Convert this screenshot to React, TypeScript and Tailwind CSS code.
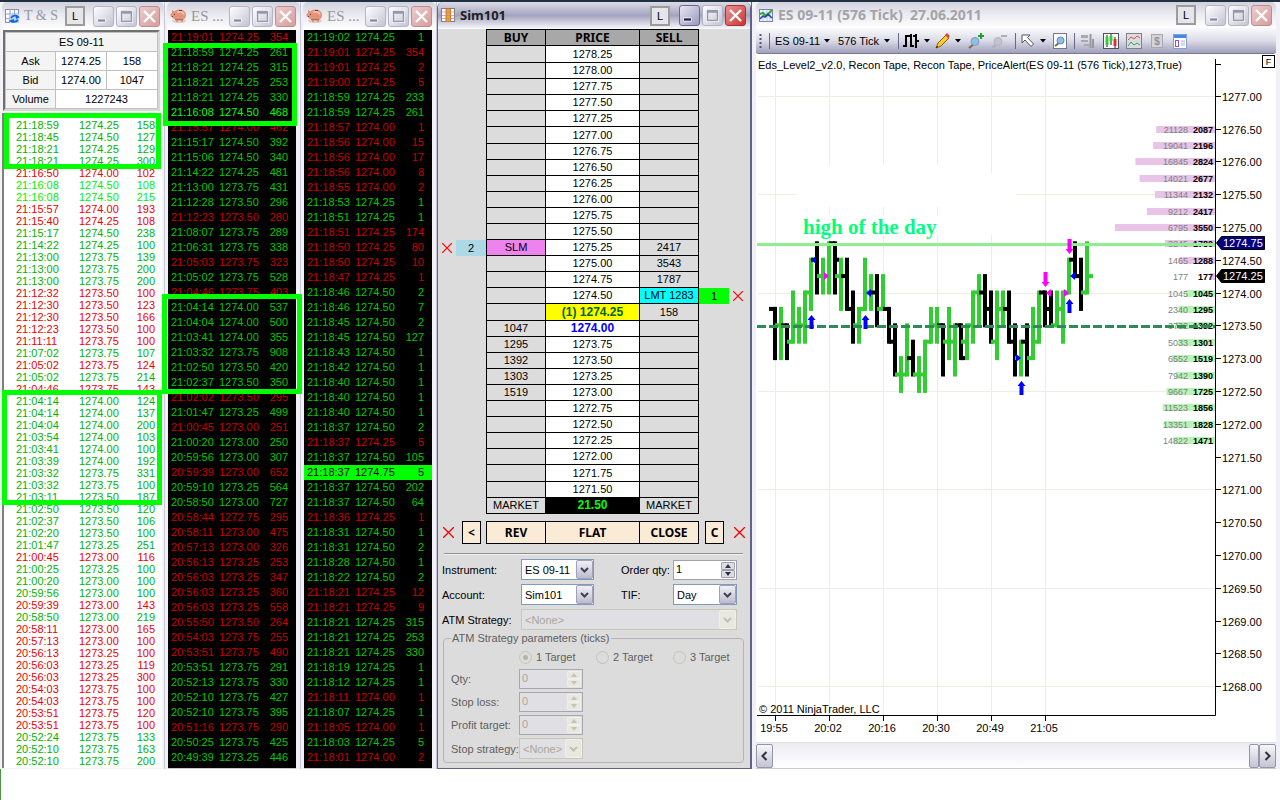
import type { ReactNode } from 'react'

type Tone = 'g' | 'r' | 'b' | 'k'
type Trade = [time: string, price: string, size: string, tone: Tone]

const parse = (text: string): Trade[] =>
    text.trim().split('\n').map((line) => line.trim().split(' ') as unknown as Trade)

const salesRows = parse(`
21:18:59 1274.25 158 g
21:18:45 1274.50 127 g
21:18:21 1274.25 129 g
21:18:21 1274.25 300 g
21:16:50 1274.00 102 r
21:16:08 1274.50 108 b
21:16:08 1274.50 215 b
21:15:57 1274.00 193 r
21:15:40 1274.25 108 r
21:15:17 1274.50 238 g
21:14:22 1274.25 100 g
21:13:00 1273.75 139 g
21:13:00 1273.75 200 g
21:13:00 1273.75 200 g
21:12:32 1273.50 100 r
21:12:30 1273.50 123 r
21:12:30 1273.50 166 r
21:12:23 1273.50 100 r
21:11:11 1273.75 100 r
21:07:02 1273.75 107 g
21:05:02 1273.75 124 r
21:05:02 1273.75 214 g
21:04:46 1273.75 143 r
21:04:14 1274.00 124 g
21:04:14 1274.00 137 g
21:04:04 1274.00 200 g
21:03:54 1274.00 103 g
21:03:41 1274.00 100 g
21:03:39 1274.00 192 g
21:03:32 1273.75 331 g
21:03:32 1273.75 100 g
21:03:11 1273.50 187 g
21:02:50 1273.50 120 g
21:02:37 1273.50 106 g
21:02:20 1273.50 100 g
21:01:47 1273.25 251 g
21:00:45 1273.00 116 r
21:00:25 1273.25 100 g
21:00:20 1273.00 100 g
20:59:56 1273.00 100 g
20:59:39 1273.00 143 r
20:58:50 1273.00 219 g
20:58:11 1273.00 165 r
20:57:13 1273.00 100 r
20:56:13 1273.25 100 r
20:56:03 1273.25 119 r
20:56:03 1273.25 300 r
20:54:03 1273.75 100 r
20:54:03 1273.75 100 r
20:53:51 1273.75 120 r
20:53:51 1273.75 100 r
20:52:24 1273.75 133 g
20:52:10 1273.75 163 g
20:52:10 1273.75 200 g
`)

const blockRows = parse(`
21:19:01 1274.25 354 r
21:18:59 1274.25 261 g
21:18:21 1274.25 315 g
21:18:21 1274.25 253 g
21:18:21 1274.25 330 g
21:16:08 1274.50 468 b
21:15:57 1274.00 462 r
21:15:17 1274.50 392 g
21:15:06 1274.50 340 g
21:14:22 1274.25 481 g
21:13:00 1273.75 431 g
21:12:28 1273.50 296 g
21:12:23 1273.50 280 r
21:08:07 1273.75 289 g
21:06:31 1273.75 338 g
21:05:03 1273.75 323 r
21:05:02 1273.75 528 g
21:04:46 1273.75 403 r
21:04:14 1274.00 537 g
21:04:04 1274.00 500 g
21:03:41 1274.00 355 g
21:03:32 1273.75 908 g
21:02:50 1273.50 420 g
21:02:37 1273.50 350 g
21:02:02 1273.50 295 r
21:01:47 1273.25 499 g
21:00:45 1273.00 251 r
21:00:20 1273.00 250 g
20:59:56 1273.00 307 g
20:59:39 1273.00 652 r
20:59:10 1273.25 564 g
20:58:50 1273.00 727 g
20:58:44 1272.75 295 r
20:58:11 1273.00 475 r
20:57:13 1273.00 326 r
20:56:13 1273.25 253 r
20:56:03 1273.25 347 r
20:56:03 1273.25 360 r
20:56:03 1273.25 558 r
20:55:50 1273.50 264 r
20:54:03 1273.75 255 r
20:53:51 1273.75 490 r
20:53:51 1273.75 291 g
20:52:13 1273.75 330 g
20:52:10 1273.75 427 g
20:52:10 1273.75 395 g
20:51:16 1273.75 290 r
20:50:25 1273.75 425 g
20:49:39 1273.25 446 g
`)

const allRows = parse(`
21:19:02 1274.25 1 g
21:19:01 1274.25 354 r
21:19:01 1274.25 2 r
21:19:00 1274.25 5 r
21:18:59 1274.25 233 g
21:18:59 1274.25 261 g
21:18:57 1274.00 1 r
21:18:56 1274.00 15 r
21:18:56 1274.00 17 r
21:18:56 1274.00 8 r
21:18:55 1274.00 2 r
21:18:53 1274.25 1 g
21:18:51 1274.25 1 g
21:18:51 1274.25 174 r
21:18:50 1274.25 80 r
21:18:50 1274.25 10 r
21:18:47 1274.25 1 r
21:18:46 1274.50 2 g
21:18:46 1274.50 7 g
21:18:45 1274.50 2 g
21:18:45 1274.50 127 g
21:18:43 1274.50 1 g
21:18:42 1274.50 1 g
21:18:40 1274.50 1 g
21:18:40 1274.50 1 g
21:18:40 1274.50 1 g
21:18:37 1274.50 2 g
21:18:37 1274.25 5 r
21:18:37 1274.50 105 g
21:18:37 1274.75 5 k
21:18:37 1274.50 202 g
21:18:37 1274.50 64 g
21:18:36 1274.25 1 r
21:18:31 1274.50 1 g
21:18:31 1274.50 2 g
21:18:28 1274.50 1 g
21:18:22 1274.50 2 g
21:18:21 1274.25 12 r
21:18:21 1274.25 9 r
21:18:21 1274.25 315 g
21:18:21 1274.25 253 g
21:18:21 1274.25 330 g
21:18:19 1274.25 1 g
21:18:12 1274.25 1 g
21:18:11 1274.00 1 r
21:18:07 1274.25 1 g
21:18:05 1274.00 1 r
21:18:03 1274.25 5 g
21:18:01 1274.00 2 r
`)

const lightTones: Record<Tone, string> = {
    g: 'text-[#00b400]',
    r: 'text-[#f00000]',
    b: 'text-[#00f000]',
    k: 'text-black',
}

const darkTones: Record<Tone, string> = {
    g: 'text-[#00c800]',
    r: 'text-[#c80000]',
    b: 'text-[#00ff00]',
    k: 'bg-[#00ff00] text-black',
}

/* ---------- window chrome ---------- */

function CaptionButton({ kind, active, dim }: { kind: 'min' | 'max' | 'close'; active?: boolean; dim?: boolean }) {
    const look =
        kind === 'close'
            ? active
                ? 'border-[#b03030] bg-linear-to-br from-[#f09090] to-[#c83030]'
                : 'border-[#c08c94] bg-linear-to-br from-[#eccccc] to-[#d89c9c]'
            : active && !dim
                ? 'border-[#6a6a90] bg-linear-to-br from-[#e8e8f4] to-[#9a9abc]'
                : 'border-[#b4b4c6] bg-linear-to-br from-white to-[#c4c4d4]'
    return (
        <button
            type="button"
            aria-label={kind === 'min' ? 'Minimize' : kind === 'max' ? 'Maximize' : 'Close'}
            className={`flex size-[21px] shrink-0 items-center justify-center rounded-[3px] border ${look}`}
        >
            <svg width="17" height="17" viewBox="0 0 17 17" fill="none">
                {kind === 'min' && <path d="M2.500 12.500h8" stroke="#fff" strokeWidth="4" />}
                {kind === 'min' && <path d="M3 12.500h7" stroke={active ? '#26264a' : '#8c8ca0'} strokeWidth="2.400" />}
                {kind === 'max' && (
                    <>
                        <rect x="2.500" y="2.500" width="12" height="12" stroke="#fff" />
                        <path d="M3.500 3.500h10v10h-10zM3.500 5h10" stroke="#9898ac" strokeWidth="1.500" />
                    </>
                )}
                {kind === 'close' && <path d="M3 3l11 11M14 3L3 14" stroke="#fff" strokeWidth="2.400" />}
            </svg>
        </button>
    )
}

interface TitleBarProps {
    icon: ReactNode
    title: string
    titleClass: string
    height?: string
    link?: string
    active?: boolean
}

function TitleBar({ icon, title, titleClass, height = 'h-7', link, active }: TitleBarProps) {
    const bg = active
        ? 'from-[#dcdce6] via-[#a4a4c0] to-[#fafafe]'
        : 'from-[#d2d2de] via-[#ececf2] to-white'
    return (
        <div className={`flex items-center gap-[2px] rounded-t-[5px] bg-linear-to-b pr-1 pl-[3px] ${height} ${bg}`}>
            {icon}
            <h2 className={`min-w-0 flex-1 overflow-hidden pl-[2px] whitespace-pre ${titleClass}`}>{title}</h2>
            {link && (
                <button type="button" className={`size-5 shrink-0 border-2 border-[#9c9c9c] bg-[#e6e6ea] text-center text-[11px] leading-4 text-black ${link}`}>L</button>
            )}
            <CaptionButton kind="min" active={active} />
            <CaptionButton kind="max" active={active} dim />
            <CaptionButton kind="close" active={active} />
        </div>
    )
}

const SheetIcon = () => (
    <svg className="shrink-0" width="15" height="15" viewBox="0 0 15 15">
        <rect x=".5" y=".5" width="13" height="13" fill="#fff" stroke="#8c8cac" />
        <path d="M5 1v13M9.500 1v13M1 5h13M1 9.500h13" stroke="#9c9cbc" />
        <rect x="5" y="5" width="9" height="9" fill="#b8d8f8" />
        <path d="M6 9c2-3 5-3 7-1l-2 1M13 11c-3 3-5 2-7 1l3-1" stroke="#1464dc" strokeWidth="2" fill="none" />
    </svg>
)

const PigIcon = () => (
    <svg className="shrink-0" width="17" height="16" viewBox="0 0 17 16">
        <ellipse cx="9" cy="13" rx="7" ry="2" fill="#d8d0d0" />
        <path d="M2 2l2.500 1.500C5.500 2 7 1.500 9.500 1.500c4 0 6.500 2 6.500 5.500 0 2-1 4-3 5V14h-2v-1.500H8V14H6v-2.500C4 11 3 10.500 2 9L.5 8.500V6L2 5z" fill="#e0957c" />
        <path d="M7 4.500c3-1.500 6-.5 7 2" stroke="#f6c8b4" strokeWidth="1.500" fill="none" />
        <path d="M4 6.500h1M2 8.500h1M9 2.500h3" stroke="#7a3a2c" />
        <path d="M5 11.500h8" stroke="#b86450" />
    </svg>
)

const LadderIcon = () => (
    <svg className="shrink-0" width="15" height="15" viewBox="0 0 15 15">
        <rect x=".5" y=".5" width="13" height="13" fill="#fff" stroke="#8c7c7c" />
        <rect x="5" y="1" width="5" height="12.500" fill="#f8a020" />
        <path d="M5 1v13M9.500 1v13" stroke="#c87828" />
        <path d="M1 4h13M1 7.500h13M1 10.500h13" stroke="#ac8c9c" strokeOpacity=".7" />
    </svg>
)

const ChartIcon = () => (
    <svg className="shrink-0" width="15" height="15" viewBox="0 0 15 15">
        <rect x=".5" y="1.500" width="13" height="12" fill="#f4f6ff" stroke="#7884b4" />
        <path d="M4 2v11M8 2v11M11 2v11M1 5h12M1 9h12" stroke="#bcc4e4" />
        <path d="M1 6l3-1 3 3 6-6" stroke="#30b030" strokeWidth="2" fill="none" />
        <path d="M1 11l3-3 2 1 3-3 4 4" stroke="#2848b0" strokeWidth="1.500" fill="none" />
    </svg>
)

/* ---------- time & sales ---------- */

function QuoteTable() {
    const cell = 'h-[19px] border border-[#c0c0c0] p-0 text-center font-normal'
    return (
        <table className="w-full table-fixed border-collapse bg-white text-[11px] leading-4">
            <colgroup>
                <col className="w-[50px]" />
                <col className="w-[51px]" />
                <col />
            </colgroup>
            <tbody>
                <tr><th colSpan={3} className={`${cell} bg-[#f4f4f4]`}>ES 09-11</th></tr>
                <tr>
                    <th scope="row" className={`${cell} bg-[#f4f4f4]`}>Ask</th>
                    <td className={cell}>1274.25</td>
                    <td className={cell}>158</td>
                </tr>
                <tr>
                    <th scope="row" className={`${cell} bg-[#f4f4f4]`}>Bid</th>
                    <td className={cell}>1274.00</td>
                    <td className={cell}>1047</td>
                </tr>
                <tr>
                    <th scope="row" className={`${cell} bg-[#f4f4f4]`}>Volume</th>
                    <td colSpan={2} className={cell}>1227243</td>
                </tr>
            </tbody>
        </table>
    )
}

function TimeAndSales() {
    return (
        <section className="w-[165px] shrink-0 border-r border-[#c8c8d8] bg-[#f4f4f8] pl-[2px]">
            <TitleBar icon={<SheetIcon />} title="T & S" titleClass="font-['Liberation_Serif',serif] text-sm text-[#98989c]" link="mr-[6px]" />
            <div className="mr-1 ml-px border-2 border-[#707070] border-r-[#d8d8d8] border-b-[#d8d8d8]">
                <QuoteTable />
            </div>
            <div className="mt-[2px] mr-[2px] border-l-2 border-[#808080] bg-white pt-[6px] pb-px">
                <table className="w-full table-fixed text-[11px] leading-3">
                    <tbody>
                        {salesRows.map(([time, price, size, tone], i) => (
                            <tr key={i} className={lightTones[tone]}>
                                <td className="w-[75px] py-0 pr-0 pl-3">{time}</td>
                                <td className="w-10 p-0">{price}</td>
                                <td className="py-0 pr-[7px] pl-0 text-right">{size}</td>
                            </tr>
                        ))}
                    </tbody>
                </table>
            </div>
        </section>
    )
}

function Tape({ rows }: { rows: Trade[] }) {
    return (
        <section className="w-[136px] shrink-0 border-r border-[#c8c8d8] bg-[#f0f0f6]">
            <div className="pl-[2px]">
                <TitleBar icon={<PigIcon />} title="ES ..." titleClass="font-['Liberation_Serif',serif] text-[15px] text-[#98989c]" />
            </div>
            <div className="mr-1 ml-[3px] border-b border-[#c8c8d8] bg-black pb-[3px]">
                <table className="w-full table-fixed text-[11px] leading-[15px]">
                    <tbody>
                        {rows.map(([time, price, size, tone], i) => (
                            <tr key={i} className={darkTones[tone]}>
                                <td className="w-[51px] py-0 pr-0 pl-[3px]">{time}</td>
                                <td className="w-10 p-0">{price}</td>
                                <td className="py-0 pr-2 pl-0 text-right">{size}</td>
                            </tr>
                        ))}
                    </tbody>
                </table>
            </div>
        </section>
    )
}

/* ---------- price ladder ---------- */

const buyDepth: Record<string, string> = {
    '1275.25': 'SLM',
    '1274.00': '1047',
    '1273.75': '1295',
    '1273.50': '1392',
    '1273.25': '1303',
    '1273.00': '1519',
}

const sellDepth: Record<string, string> = {
    '1275.25': '2417',
    '1275.00': '3543',
    '1274.75': '1787',
    '1274.50': 'LMT 1283',
    '1274.25': '158',
}

const ladder = Array.from({ length: 28 }, (_, i) => (1278.25 - i * 0.25).toFixed(2))

// the ladder spreads its spare pixels over a few rows
const tallRows = ['1278.25', '1277.00', '1274.25', '1271.75']

const RedX = ({ size = 10 }: { size?: number }) => (
    <svg className="mx-auto block" width={size} height={size} viewBox="0 0 10 10">
        <path d="M0 0l10 10M10 0L0 10" stroke="#ff0000" strokeWidth="1.200" />
    </svg>
)

function PriceLadder() {
    const side = 'border-r border-b border-black p-0'
    return (
        <table className="w-full table-fixed border-separate border-spacing-0 text-center text-[11px] leading-[15px]">
            <colgroup>
                <col className="w-[18px]" />
                <col className="w-[30px]" />
                <col className="w-[60px]" />
                <col className="w-[94px]" />
                <col className="w-[59px]" />
                <col className="w-[30px]" />
                <col />
            </colgroup>
            <thead>
                <tr className="h-[17px] font-['Noto_Sans',sans-serif] text-xs leading-[15px] font-bold">
                    <td colSpan={2} className="p-0" />
                    <th scope="col" className={`${side} border-t border-l bg-[#a8a8a8]`}>BUY</th>
                    <th scope="col" className={`${side} border-t bg-[#a8a8a8]`}>PRICE</th>
                    <th scope="col" className={`${side} border-t bg-[#a8a8a8]`}>SELL</th>
                    <td colSpan={2} className="p-0" />
                </tr>
            </thead>
            <tbody>
                {ladder.map((price) => {
                    const stop = price === '1275.25'
                    const limit = price === '1274.50'
                    return (
                        <tr key={price} className={tallRows.includes(price) ? 'h-[17px]' : 'h-4'}>
                            <td className="p-0">{stop && <button type="button" aria-label="Cancel stop" className="block w-full"><RedX /></button>}</td>
                            <td className={`p-0 ${stop ? 'bg-[#add8e6]' : ''}`}>{stop && '2'}</td>
                            <td className={`${side} border-l ${stop ? 'bg-[#ee82ee]' : ''}`}>{buyDepth[price]}</td>
                            {price === '1274.25' ? (
                                <td className={`${side} bg-[#ffff00] text-xs leading-[15px] font-bold text-[#006400]`}>(1) 1274.25</td>
                            ) : price === '1274.00' ? (
                                <td className={`${side} bg-white text-xs leading-[15px] font-bold text-[#0000ff]`}>1274.00</td>
                            ) : (
                                <td className={`${side} bg-white`}>{price}</td>
                            )}
                            <td className={`${side} ${limit ? 'bg-[#00ffff]' : ''}`}>{sellDepth[price]}</td>
                            <td className={`p-0 ${limit ? 'bg-[#00ff00]' : ''}`}>{limit && '1'}</td>
                            <td className="p-0 pr-1">{limit && <button type="button" aria-label="Cancel limit" className="block w-full"><RedX /></button>}</td>
                        </tr>
                    )
                })}
                <tr className="h-4">
                    <td colSpan={2} className="p-0" />
                    <td className={`${side} border-l`}>MARKET</td>
                    <td className={`${side} bg-black text-xs leading-[15px] font-bold text-[#00ff00]`}>21.50</td>
                    <td className={side}>MARKET</td>
                    <td colSpan={2} className="p-0" />
                </tr>
            </tbody>
        </table>
    )
}

function LadderActions() {
    const key = 'h-[23px] border border-black bg-[#faebd7]'
    return (
        <div className="mt-[7px] flex items-center font-['Noto_Sans',sans-serif] text-xs font-bold">
            <button type="button" aria-label="Cancel all buy orders" className="mr-2 ml-[5px]"><RedX size={11} /></button>
            <button type="button" className={`${key} mr-[5px] w-[19px]`}>&lt;</button>
            <button type="button" className={`${key} w-[60px]`}>REV</button>
            <button type="button" className={`${key} w-[94px] border-l-0`}>FLAT</button>
            <button type="button" className={`${key} w-[59px] border-l-0`}>CLOSE</button>
            <button type="button" className={`${key} ml-[6px] w-[19px]`}>C</button>
            <button type="button" aria-label="Cancel all sell orders" className="ml-[10px]"><RedX size={11} /></button>
        </div>
    )
}

interface FieldProps {
    id: string
    value: string
    className: string
    disabled?: boolean
}

function SelectBox({ id, value, className, disabled }: FieldProps) {
    return (
        <div className={`flex h-[21px] border ${disabled ? 'border-[#c8c8b8] bg-[#e0dfe3]' : 'border-[#7f9db9] bg-white'} ${className}`}>
            <select id={id} disabled={disabled} className={`min-w-0 flex-1 appearance-none pl-[3px] ${disabled ? 'text-[#a8a898]' : 'text-black'}`}>
                <option>{value}</option>
            </select>
            <span className={`pointer-events-none flex w-[17px] shrink-0 items-center justify-center rounded-[2px] border ${disabled ? 'border-[#f0f0e8] bg-[#e8e8e0]' : 'border-[#a0a0b8] bg-linear-to-b from-[#f0f0f6] to-[#bcbcd0]'}`}>
                <svg width="9" height="6" viewBox="0 0 9 6" fill="none">
                    <path d="M1 1l3.500 3.500L8 1" stroke={disabled ? '#c0c0b0' : '#404050'} strokeWidth="2" />
                </svg>
            </span>
        </div>
    )
}

function SpinBox({ id, value, className, disabled }: FieldProps) {
    const arrow = disabled ? '#c4c4b4' : '#303040'
    const half = `flex h-2 w-[14px] items-center justify-center rounded-[1px] border ${disabled ? 'border-[#f0f0e8] bg-[#e8e8e0]' : 'border-[#a0a0b0] bg-[#dcdce6]'}`
    return (
        <div className={`flex h-5 border ${disabled ? 'border-[#a8a8b0] bg-[#e0dfe3]' : 'border-[#a0a0b0] bg-white'} ${className}`}>
            <input id={id} type="text" defaultValue={value} disabled={disabled} className={`w-0 min-w-0 flex-1 pb-[2px] pl-[2px] ${disabled ? 'text-[#a8a898]' : 'text-black'}`} />
            <span className="flex shrink-0 flex-col justify-center pr-px">
                <button type="button" aria-label="Increase" disabled={disabled} className={half}>
                    <svg width="6" height="4" viewBox="0 0 6 4"><path d="M0 4l3-4 3 4z" fill={arrow} /></svg>
                </button>
                <button type="button" aria-label="Decrease" disabled={disabled} className={half}>
                    <svg width="6" height="4" viewBox="0 0 6 4"><path d="M0 0l3 4 3-4z" fill={arrow} /></svg>
                </button>
            </span>
        </div>
    )
}

function TargetRadio({ label, checked }: { label: string; checked?: boolean }) {
    return (
        <label className="flex w-[77px] shrink-0 items-center gap-1 last:w-auto">
            <input type="radio" name="target" disabled defaultChecked={checked} className="peer sr-only" />
            <span className="flex size-[13px] items-center justify-center rounded-full border border-[#c4c4b8] after:size-[5px] after:rounded-full peer-checked:after:bg-[#b4b4a8]" />
            {label}
        </label>
    )
}

const strategyFields = [
    { id: 'strategy-qty', label: 'Qty:' },
    { id: 'stop-loss', label: 'Stop loss:' },
    { id: 'profit-target', label: 'Profit target:' },
]

function OrderForm() {
    return (
        <form className="mt-[9px] mr-[6px] ml-1 text-[11px] leading-4">
            <div className="mr-px ml-[2px] h-[2px] border-t border-[#909090] bg-[#f4f4f4]" />
            <div className="mt-1 grid grid-cols-[79px_100px_52px_64px] items-center gap-y-1">
                <label htmlFor="instrument">Instrument:</label>
                <SelectBox id="instrument" value="ES 09-11" className="w-[73px]" />
                <label htmlFor="order-qty">Order qty:</label>
                <SpinBox id="order-qty" value="1" className="w-16" />
                <label htmlFor="account">Account:</label>
                <SelectBox id="account" value="Sim101" className="w-[73px]" />
                <label htmlFor="tif">TIF:</label>
                <SelectBox id="tif" value="Day" className="w-16" />
                <label htmlFor="atm" className="whitespace-nowrap">ATM Strategy:</label>
                <SelectBox id="atm" value="<None>" className="col-span-3" disabled />
            </div>
            <fieldset className="ml-px h-[133px] min-w-0 rounded border border-[#b8b4b4] pl-[7px] text-[#606060]">
                <legend className="px-px">ATM Strategy parameters (ticks)</legend>
                <div className="mt-[3px] flex pl-[68px]">
                    <TargetRadio label="1 Target" checked />
                    <TargetRadio label="2 Target" />
                    <TargetRadio label="3 Target" />
                </div>
                <div className="mt-1 grid grid-cols-[68px_64px] items-center gap-y-[3px]">
                    {strategyFields.map(({ id, label }) => (
                        <div key={id} className="contents">
                            <label htmlFor={id}>{label}</label>
                            <SpinBox id={id} value="0" className="w-16" disabled />
                        </div>
                    ))}
                    <label htmlFor="stop-strategy" className="whitespace-nowrap">Stop strategy:</label>
                    <SelectBox id="stop-strategy" value="<None>" className="w-16" disabled />
                </div>
            </fieldset>
        </form>
    )
}

function OrderEntry() {
    return (
        <section className="w-[314px] shrink-0 rounded-t-md border-x border-b border-[#62628a] bg-[#dcdcdc]">
            <TitleBar icon={<LadderIcon />} title="Sim101" titleClass="font-['Noto_Sans',sans-serif] text-[13px] font-bold text-[#202020]" height="h-[27px]" link="mr-[7px]" active />
            <PriceLadder />
            <LadderActions />
            <OrderForm />
        </section>
    )
}

/* ---------- chart ---------- */

const priceY = (price: number) => 293.5 - (price - 1274) * 65.6
const tickY = (level: number) => priceY(1272.5 + level * 0.25) - 1

// [up, high, low, open], levels are quarter points above 1272.50
const bars: [number, number, number, number][] = [
    [0, 5, 2, 5], [1, 5, 2, 4], [0, 4, 2, 4], [1, 6, 3, 3], [1, 5, 3, 4], [1, 6, 3, 4], [1, 8, 5, 6], [0, 9, 6, 8],
    [1, 8, 6, 7], [1, 9, 6, 7], [0, 9, 6, 9], [1, 8, 5, 7], [0, 8, 5, 7], [0, 6, 3, 5], [1, 5, 3, 4], [1, 8, 5, 5],
    [1, 7, 5, 6], [0, 7, 4, 6], [1, 7, 5, 5], [0, 5, 3, 5], [0, 4, 1, 3], [1, 2, 0, 1], [1, 4, 1, 1], [0, 3, 1, 2],
    [1, 2, 0, 1], [1, 3, 0, 1], [1, 5, 3, 3], [1, 5, 3, 4], [0, 4, 1, 4], [1, 5, 2, 3], [1, 4, 1, 3], [0, 4, 2, 4],
    [1, 4, 2, 3], [1, 6, 3, 4], [1, 7, 4, 6], [0, 7, 4, 6], [0, 6, 3, 5], [1, 6, 2, 3], [1, 6, 4, 5], [0, 6, 3, 5],
    [0, 4, 1, 3], [1, 3, 1, 2], [0, 4, 1, 3], [1, 5, 2, 2], [1, 6, 3, 3], [0, 6, 4, 6], [0, 6, 4, 5], [1, 6, 4, 4],
    [1, 6, 3, 5], [1, 8, 6, 6], [0, 9, 7, 8], [0, 8, 5, 7], [1, 9, 6, 6],
]

const depth: [number, string, number][] = [
    [1276.5, '21128', 2087], [1276.25, '19041', 2196], [1276, '16845', 2824], [1275.75, '14021', 2677],
    [1275.5, '11344', 2132], [1275.25, '9212', 2417], [1275, '6795', 3550], [1274.75, '3245', 1780],
    [1274.5, '1465', 1288], [1274.25, '177', 177], [1274, '1045', 1045], [1273.75, '2340', 1295],
    [1273.5, '3732', 1392], [1273.25, '5033', 1301], [1273, '6552', 1519], [1272.75, '7942', 1390],
    [1272.5, '9667', 1725], [1272.25, '11523', 1856], [1272, '13351', 1828], [1271.75, '14822', 1471],
]

const times: [number, string][] = [[775, '19:55'], [829, '20:02'], [883, '20:16'], [937, '20:30'], [991, '20:49'], [1045, '21:05']]
const axisPrices = Array.from({ length: 19 }, (_, i) => 1277 - i * 0.5)
const gridPrices = Array.from({ length: 7 }, (_, i) => 1277 - i * 1.5)

const upArrow = 'l4 5h-2v9h-4v-9h-2z'
const downArrow = 'l4 -5h-2v-10h-4v10h-2z'

function PriceTag({ price, fill }: { price: number; fill: string }) {
    const y = Math.round(priceY(price)) - 1
    return (
        <g>
            <path d={`M1216.500 ${y}l5-6.500h43v13h-43z`} fill={fill} stroke="#000" />
            <text x="1223" y={y + 4} fill="#fff">{price.toFixed(2)}</text>
        </g>
    )
}

function PriceChart() {
    return (
        <svg className="block h-auto w-full bg-white" viewBox="756 54 520 688" fontFamily="'Liberation Sans', Arial, sans-serif" fontSize="11">
            <g stroke="#eeeee2">
                {times.map(([x]) => <path key={x} d={`M${x + 0.5} 70V715`} />)}
                {gridPrices.map((p) => <path key={p} d={`M758 ${Math.round(priceY(p)) - 0.5}H1215`} />)}
            </g>
            {/* clear space around the note */}
            <path d="M796 165h190v8h30v62h-220v-20h190v-8h-190z" fill="#fff" />

            <text x="758" y="69">Eds_Level2_v2.0, Recon Tape, Recon Tape, PriceAlert(ES 09-11 (576 Tick),1273,True)</text>
            <text x="759" y="713">© 2011 NinjaTrader, LLC</text>

            {depth.map(([price, total, size]) => {
                const y = Math.round(priceY(price))
                return (
                    <g key={price} fontSize="9" textAnchor="end">
                        <rect x={1215 - size / 35.5} y={y - 4} width={size / 35.5} height="7" fill={price > 1274 ? '#e8c4e8' : '#b8f4b8'} />
                        <text x="1188" y={y + 3} fill="#808080">{total}</text>
                        <text x="1213" y={y + 3} fontWeight="bold">{size}</text>
                    </g>
                )
            })}

            {bars.map(([up, high, low, open], i) => {
                const x = 775 + i * 6
                return (
                    <g key={i} fill={up ? '#32cd32' : '#000'}>
                        <rect x={x - 2} y={tickY(high) - 2} width="4" height={tickY(low) - tickY(high) + 4} />
                        <rect x={x - 6} y={tickY(open) - 2} width="6" height="4" />
                    </g>
                )
            })}
            <rect x="835" y={tickY(8) - 2} width="4" height="4" />
            <rect x="961" y={tickY(2) - 2} width="4" height="4" />
            <rect x="1087" y={tickY(7) - 2} width="6" height="4" fill="#32cd32" />

            <path d="M757 244.500H1215" stroke="#90ee90" strokeWidth="3" />
            <path d="M757 326.500H1215" stroke="#2e8b57" strokeWidth="3" strokeDasharray="9 3" />

            <g fill="#0000ff">
                <path d={`M811.500 315${upArrow}`} />
                <path d={`M865.500 315${upArrow}`} />
                <path d={`M1021.500 381${upArrow}`} />
                <path d={`M1069.500 299${upArrow}`} />
                <path d="M811 260l5-4v8zM866 293l5-4v8zM1070 276l5-4v8zM1021 358l-5-4v8z" />
            </g>
            <g fill="#ff00ff">
                <path d={`M1045.500 287${downArrow}`} />
                <path d={`M1069.500 254${downArrow}`} />
                <path d="M829 276l-5-4v8zM1069 293l-5-4v8zM1046 293l5-4v8z" />
            </g>

            <text x="803" y="234" fontFamily="'Liberation Serif', serif" fontSize="21" fontWeight="bold" fill="#00ff7f">high of the day</text>

            <path d="M757 715.500H1215.500V59M1216 64.500h5" stroke="#000" fill="none" />
            {axisPrices.map((p) => {
                const y = Math.round(priceY(p)) - 0.5
                return (
                    <g key={p}>
                        <path d={`M1216 ${y}h5`} stroke="#000" />
                        <text x="1222" y={y + 4}>{p.toFixed(2)}</text>
                    </g>
                )
            })}
            {times.map(([x, label]) => (
                <g key={x}>
                    <path d={`M${x + 0.5} 716v5`} stroke="#000" />
                    <text x={x - 1} y="732" textAnchor="middle">{label}</text>
                </g>
            ))}
            <PriceTag price={1274.75} fill="#000080" />
            <PriceTag price={1274.25} fill="#000" />
            <rect x="1262.500" y="55.500" width="12" height="12" fill="#fff" stroke="#000" />
            <text x="1268.500" y="65" fontSize="9" textAnchor="middle">F</text>
        </svg>
    )
}

const Caret = () => (
    <svg className="shrink-0" width="6" height="4" viewBox="0 0 6 4"><path d="M0 0h6L3 3.500z" /></svg>
)

const Divider = () => <span className="h-4 w-px shrink-0 bg-[#68688c]" />

function Tool({ label, children, className = '' }: { label: string; children: ReactNode; className?: string }) {
    return (
        <button type="button" aria-label={label} className={`flex shrink-0 items-center gap-1 ${className}`}>
            {children}
        </button>
    )
}

function Glyph({ children }: { children: ReactNode }) {
    return <svg className="shrink-0" width="16" height="16" viewBox="0 0 16 16" fill="none">{children}</svg>
}

function ChartToolbar() {
    return (
        <div className="flex h-[26px] items-center rounded-b-[3px] border-b border-[#78789a] bg-linear-to-b from-[#fafafc] via-[#dcdce8] to-[#a0a0bc] pl-[3px] text-[11px] leading-4">
            <svg className="mr-[7px] shrink-0" width="3" height="14" viewBox="0 0 3 14"><path d="M1.500 0v14" stroke="#55557a" strokeWidth="2" strokeDasharray="2 2" /></svg>
            <Divider />
            <button type="button" className="ml-[5px] flex items-center gap-1 whitespace-nowrap">ES 09-11 <Caret /></button>
            <button type="button" className="ml-2 flex items-center gap-[5px] whitespace-nowrap">576 Tick <Caret /></button>
            <span className="w-2" />
            <Divider />
            <Tool label="Chart style" className="ml-[3px]">
                <svg className="shrink-0" width="18" height="16" viewBox="0 0 18 16" fill="none">
                    <path d="M4 2v12M1 13h3M4 3h3M9 1v13M7 3h2M9 13h3M14 1v14M11 3h3M14 8h3" stroke="#000" strokeWidth="2" />
                </svg>
                <Caret />
            </Tool>
            <Tool label="Drawing tools" className="ml-[5px]">
                <Glyph>
                    <path d="M1 15l2-5 8-8 3 3-8 8z" fill="#f8cc30" stroke="#906010" />
                    <path d="M10 2l2-2 3 3-2 2z" fill="#e04830" />
                    <path d="M1 15l1-2 1 1z" fill="#000" />
                </Glyph>
                <Caret />
            </Tool>
            <Tool label="Zoom in" className="ml-[7px]">
                <Glyph>
                    <path d="M1 15l5-4" stroke="#806850" strokeWidth="2" />
                    <circle cx="7" cy="8.500" r="4" fill="#8cc0e8" stroke="#8898a8" />
                    <path d="M10 3h6M13 0v6" stroke="#10a830" strokeWidth="2" />
                </Glyph>
            </Tool>
            <Tool label="Zoom out" className="ml-[7px]">
                <Glyph>
                    <path d="M1 15l5-4" stroke="#b0b0b4" strokeWidth="2" />
                    <circle cx="7" cy="8.500" r="4" fill="#c4c4cc" stroke="#b4b4bc" />
                    <path d="M10 3h6" stroke="#b0b0b8" strokeWidth="2" />
                </Glyph>
            </Tool>
            <span className="w-2" />
            <Divider />
            <Tool label="Pointer" className="ml-1">
                <Glyph>
                    <path d="M2 2h8L7.500 4.500l6 6.500-2.500 2.500-6-6.500L2 10z" fill="#fff" stroke="#55555a" />
                </Glyph>
                <Caret />
            </Tool>
            <Tool label="Data box" className="ml-[6px]">
                <Glyph>
                    <rect x="1.500" y=".5" width="13" height="15" fill="#fff" stroke="#78788c" />
                    <path d="M3 13l4-3" stroke="#806850" strokeWidth="2" />
                    <circle cx="8.500" cy="7.500" r="3.500" fill="#8cc0e8" stroke="#6888b0" />
                </Glyph>
            </Tool>
            <span className="w-[6px]" />
            <Divider />
            <Tool label="Chart trader" className="ml-[5px]">
                <Glyph>
                    <path d="M1 2h7v3H1zM1 7h7v2H1zM4 11h5v2H4z" fill="#a8a8b0" />
                    <path d="M10.500 1v14M13 6v9" stroke="#98989f" strokeWidth="2" />
                </Glyph>
            </Tool>
            <Tool label="Data series" className="ml-[7px]">
                <Glyph>
                    <rect x=".5" y=".5" width="15" height="15" fill="#fff" stroke="#505058" />
                    <path d="M4 2v12M8 1v11M12 4v11" stroke="#202020" />
                    <path d="M2.500 4h3v8h-3zM6.500 3h3v5h-3z" fill="#30d030" />
                    <path d="M10.500 6h3v7h-3z" fill="#e03030" />
                </Glyph>
            </Tool>
            <Tool label="Indicators" className="ml-[7px]">
                <Glyph>
                    <rect x=".5" y=".5" width="15" height="15" fill="#dcdce0" stroke="#808088" />
                    <path d="M2 7l3-3 3 2 3-3 3 2" stroke="#e05050" />
                    <path d="M2 13l3-4 3 3 3-2 3 2" stroke="#30a060" />
                </Glyph>
            </Tool>
            <Tool label="Strategies" className="ml-[7px]">
                <Glyph>
                    <rect x="2.500" y="1.500" width="11" height="13" fill="#d4d4dc" stroke="#a8a8b0" />
                    <text x="8" y="12" fontSize="10" fontWeight="bold" textAnchor="middle" fill="#909098">$</text>
                </Glyph>
            </Tool>
            <Tool label="Properties" className="ml-[7px]">
                <Glyph>
                    <rect x="1.500" y="1.500" width="13" height="14" fill="#fff" stroke="#88a0d0" />
                    <path d="M2 2h12v3H2z" fill="#3c8ce8" />
                    <rect x="3.500" y="7.500" width="3" height="6" stroke="#8c50e0" />
                    <path d="M9 8h4M9 10h4M9 12h4" stroke="#b0b8cc" />
                </Glyph>
            </Tool>
        </div>
    )
}

function ScrollBar() {
    const key = 'flex h-6 items-center justify-center rounded-[2px] border border-[#9494ac] bg-linear-to-b from-[#f6f6fa] to-[#c4c4d4]'
    return (
        <div className="flex h-[26px] items-center justify-between border-t border-[#e0e0e8] bg-linear-to-b from-[#ececf2] to-white">
            <button type="button" aria-label="Scroll left" className={`${key} w-[17px]`}>
                <svg width="7" height="10" viewBox="0 0 7 10" fill="none"><path d="M5.500 1l-4 4 4 4" stroke="#303038" strokeWidth="2" /></svg>
            </button>
            <div className="flex">
                <span className={`${key} w-[10px]`} />
                <button type="button" aria-label="Scroll right" className={`${key} w-[17px]`}>
                    <svg width="7" height="10" viewBox="0 0 7 10" fill="none"><path d="M1.500 1l4 4-4 4" stroke="#303038" strokeWidth="2" /></svg>
                </button>
            </div>
        </div>
    )
}

function ChartWindow() {
    return (
        <section className="min-w-0 flex-1 border-l border-[#62628a] bg-[#f0f0f6] pr-1 pl-1">
            <TitleBar icon={<ChartIcon />} title="ES 09-11 (576 Tick)  27.06.2011" titleClass="font-['Noto_Sans',sans-serif] text-sm font-bold text-[#a4a4a8]" height="h-[26px]" link="mr-[7px]" />
            <div className="border-b border-[#c8c8d8]">
                <ChartToolbar />
                <PriceChart />
                <ScrollBar />
            </div>
        </section>
    )
}

/* highlighter boxes drawn over the tapes */
const marks = [
    'left-1 top-[113px] h-[56px] w-[157px]',
    'left-[2px] top-[390px] h-[115px] w-[160px]',
    'left-[163px] top-[43px] h-[83px] w-[134px]',
    'left-[162px] top-[294px] h-[100px] w-[140px]',
]

export default function App() {
    return (
        <main className="relative flex min-h-screen flex-col overflow-hidden bg-white font-['Liberation_Sans',Arial,sans-serif] text-black">
            <div className="flex border-t-2 border-[#203040] bg-[#f0f0f6]">
                <TimeAndSales />
                <Tape rows={blockRows} />
                <Tape rows={allRows} />
                <OrderEntry />
                <ChartWindow />
            </div>
            <div className="w-px flex-1 bg-[#4c9848]" />
            {marks.map((place) => (
                <div key={place} className={`pointer-events-none absolute border-[5px] border-[#00ff00] ${place}`} />
            ))}
        </main>
    )
}
